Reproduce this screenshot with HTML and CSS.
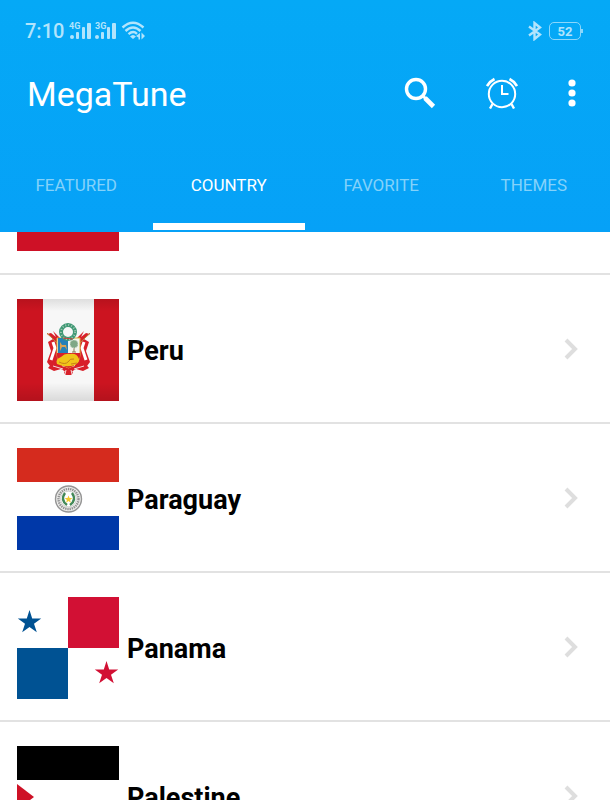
FILE: index.html
```html
<!DOCTYPE html>
<html lang="en">
<head>
  <meta charset="UTF-8" />
  <meta name="viewport" content="width=device-width, initial-scale=1.0"/>
  <title>MegaTune</title>
  <link rel="stylesheet" href="styles.css">
</head>
<body>
  <header class="header">
    <div class="status-bar">
      <span class="time">7:10</span>
      <svg class="signal" width="22" height="18" viewBox="0 0 22 18">
        <text x="0" y="7">4G</text>
        <circle cx="3" cy="15" r="2"/>
        <rect x="7" y="10" width="3" height="7" rx="1"/>
        <rect x="13" y="5" width="3" height="12" rx="1"/>
        <rect x="18" y="1" width="4" height="16" rx="1"/>
      </svg>
      <svg class="signal" width="22" height="18" viewBox="0 0 22 18">
        <text x="0" y="7">3G</text>
        <circle cx="2" cy="15" r="2"/>
        <rect x="6" y="10" width="3" height="7" rx="1"/>
        <rect x="12" y="5" width="3" height="12" rx="1"/>
        <rect x="17" y="1" width="4" height="16" rx="1"/>
      </svg>
      <svg class="wifi" width="26" height="20" viewBox="0 0 26 20">
        <g fill="none" stroke="currentColor" stroke-width="2.4">
          <path d="M1.500 6.500 Q12 -3 22.500 6.500"/>
          <path d="M4.500 10 Q12 3 19.500 10"/>
          <path d="M7.500 13.200 Q12 9.200 16 12.800"/>
        </g>
        <path d="M9 15.500 Q12 12.500 15 15.500 L12 18Z"/>
        <path d="M19 12v6.500h-1.500v-2l-2.500-1.500zM20.500 11.500l3.500 3.500-3.500 3.500z"/>
      </svg>
      <div class="status-right">
        <svg width="16" height="20" viewBox="0 0 16 20">
          <path d="M2 5.500 L13 13.500 L7.500 18 V2 L13 6.500 L2 14.500" fill="none" stroke="currentColor" stroke-width="2.4"/>
        </svg>
        <span class="battery">52</span>
      </div>
    </div>

    <div class="toolbar">
      <h1>MegaTune</h1>
      <button class="icon-btn" aria-label="Search">
        <svg width="32" height="32" viewBox="0 0 32 32" fill="none" stroke="#fff">
          <circle cx="12" cy="12" r="9.500" stroke-width="3.400"/>
          <path d="M18.500 18.500l3 3" stroke-width="3"/>
          <path d="M21 21l8.500 8.500" stroke-width="4.600"/>
        </svg>
      </button>
      <button class="icon-btn alarm" aria-label="Alarm">
        <svg width="32" height="32" viewBox="0 0 32 32" fill="none" stroke="#fff" stroke-width="2">
          <circle cx="16" cy="17" r="13.200"/>
          <path d="M16 8v9h6.500"/>
          <path d="M1 9Q3.500 4.500 8.500 2M31 9Q28.500 4.500 23.500 2" stroke-width="2.600"/>
          <path d="M6.500 27l-2.500 4.500M25.500 27l2.500 4.500" stroke-width="2.400"/>
        </svg>
      </button>
      <button class="icon-btn more" aria-label="More options">
        <svg width="8" height="28" viewBox="0 0 8 28" fill="#fff">
          <circle cx="4" cy="4" r="3.600"/>
          <circle cx="4" cy="14" r="3.600"/>
          <circle cx="4" cy="24" r="3.600"/>
        </svg>
      </button>
    </div>

    <nav class="tabs">
      <a href="#featured">FEATURED</a>
      <a href="#country" class="active">COUNTRY</a>
      <a href="#favorite">FAVORITE</a>
      <a href="#themes">THEMES</a>
    </nav>
  </header>

  <main class="country-list">
    <!-- row scrolled under the header -->
    <div class="country clipped">
      <svg class="flag-edge" viewBox="0 0 102 19"><rect width="102" height="19" fill="#ce1126"/></svg>
    </div>

    <a class="country" href="#peru">
      <svg class="flag" viewBox="0 0 102 102">
        <defs>
          <linearGradient id="shade" x1="0" y1="0" x2="0" y2="1">
            <stop offset="0" stop-color="#000" stop-opacity=".1"/>
            <stop offset=".12" stop-color="#000" stop-opacity="0"/>
            <stop offset=".82" stop-color="#000" stop-opacity="0"/>
            <stop offset="1" stop-color="#000" stop-opacity=".12"/>
          </linearGradient>
        </defs>
        <rect width="102" height="102" fill="#cc1420"/>
        <rect x="26" width="51" height="102" fill="#f7f7f7"/>
        <rect width="102" height="102" fill="url(#shade)"/>
        <!-- flags around the shield -->
        <g fill="#d8202a">
          <path d="M36 32l9 9v26H33l-3-4 4-11-3-9 5-3-6-5 4-1 5 4z"/>
          <path d="M67 32l-9 9v26h12l3-4-4-11 3-9-5-3 6-5-4-1-5 4z"/>
          <path d="M36 63q15 10 31 0l5 6-6 3-7-2-5 3h-5l-5-3-7 2-6-3z"/>
          <path d="M50 67h3l3 7-2 2h-5l-2-2z"/>
        </g>
        <path d="M36 43l2 6-4 12M67 43l-2 6 4 12" fill="none" stroke="#fff" stroke-width="3"/>
        <path d="M30 34l14 14M73 34L59 48" stroke="#b68b3a" stroke-width="1"/>
        <path d="M36 67l10 3M67 67l-10 3M49 71l-1 4M54 71l1 4" stroke="#f5dede" stroke-width="1"/>
        <!-- shield -->
        <path d="M40 39h23v17q0 9-11.500 13Q40 65 40 56z" fill="#f4f5ef" stroke="#d9b13a" stroke-width="1"/>
        <path d="M41 39h10v15H41z" fill="#2680b8"/>
        <path d="M40 54h23v3q0 8-11.500 12Q40 65 40 57z" fill="#d8202a"/>
        <path d="M43 43l2 3h4l1 5-2-3h-3l-2 4v-5z" fill="#d9a253"/>
        <path d="M57 45v8M55 53h4" stroke="#8a7a52" stroke-width="1"/>
        <circle cx="57" cy="45" r="4" fill="#7fa886" stroke="#dfe9dc" stroke-dasharray="1 1"/>
        <path d="M40 65q-2-5 4-7 4-4 9-3 7-1 9 5 1 3-4 6-9 3-18-1z" fill="#f0c419"/>
        <path d="M42 63q6 3 9 0 2-4 6-3M54 65l6-1" fill="none" stroke="#c7801c" stroke-width="1"/>
        <!-- wreath -->
        <circle cx="51" cy="33" r="7" fill="none" stroke="#3f9874" stroke-width="4"/>
        <circle cx="51" cy="33" r="7" fill="none" stroke="#a3c9b5" stroke-width="2" stroke-dasharray="1 2"/>
        <path d="M46 39l10 1" stroke="#cc3d3a" stroke-width="1"/>
      </svg>
      <span class="name">Peru</span>
      <svg class="chevron" viewBox="0 0 14 22"><path d="M2 2l9 9-9 9"/></svg>
    </a>

    <a class="country" href="#paraguay">
      <svg class="flag" viewBox="0 0 102 102">
        <rect width="102" height="102" fill="#fff"/>
        <rect width="102" height="34" fill="#d52b1e"/>
        <rect y="68" width="102" height="34" fill="#0038a8"/>
        <circle cx="51.500" cy="51" r="13" fill="#eeeeec" stroke="#959595" stroke-width="1.400"/>
        <circle cx="51.500" cy="51" r="10" fill="none" stroke="#919191" stroke-width="2.400" stroke-dasharray="1.400 .8"/>
        <circle cx="51.500" cy="51" r="7.800" fill="#fff" stroke="#b7b7b7" stroke-width=".6"/>
        <path d="M48 45q-5 7 2 12M55 45q5 7-2 12" fill="none" stroke="#438958" stroke-width="2.400"/>
        <path d="M51.500 47.500l1 2.600h2.800l-2.200 1.800.8 2.800-2.400-1.700-2.400 1.700.8-2.800-2.200-1.800h2.800z" fill="#f3c92f"/>
      </svg>
      <span class="name">Paraguay</span>
      <svg class="chevron" viewBox="0 0 14 22"><path d="M2 2l9 9-9 9"/></svg>
    </a>

    <a class="country" href="#panama">
      <svg class="flag" viewBox="0 0 102 102">
        <rect width="102" height="102" fill="#fff"/>
        <rect x="51" width="51" height="51" fill="#d21034"/>
        <rect y="51" width="51" height="51" fill="#005293"/>
        <path d="M12.500 13l2.700 8.500h9l-7.200 5.200 2.800 8.600-7.300-5.300-7.300 5.300L8 26.700.8 21.500h9z" fill="#005293"/>
        <path d="M89.500 64l2.700 8.500h9L94 77.700l2.800 8.600-7.300-5.300-7.300 5.300 2.800-8.600-7.200-5.200h9z" fill="#d21034"/>
      </svg>
      <span class="name">Panama</span>
      <svg class="chevron" viewBox="0 0 14 22"><path d="M2 2l9 9-9 9"/></svg>
    </a>

    <a class="country" href="#palestine">
      <svg class="flag" viewBox="0 0 102 102">
        <rect width="102" height="102" fill="#fff"/>
        <rect width="102" height="34" fill="#000"/>
        <rect y="68" width="102" height="34" fill="#007a3d"/>
        <path d="M0 38l17 13L0 64z" fill="#ce1126"/>
      </svg>
      <span class="name">Palestine</span>
      <svg class="chevron" viewBox="0 0 14 22"><path d="M2 2l9 9-9 9"/></svg>
    </a>
  </main>
</body>
</html>
```
FILE: styles.css
```css
* {
  box-sizing: border-box;
}

body {
  font-family: Roboto, Arial, sans-serif;
  margin: 0;
  height: 100vh;
  display: flex;
  flex-direction: column;
  overflow: hidden;
  background: #fff;
}

.header {
  flex-shrink: 0;
  background: linear-gradient(#05a9f6, #06a1f7);
  color: #fff;
}

.status-bar {
  display: flex;
  align-items: center;
  height: 62px;
  padding: 0 29px 0 25px;
  color: #b2e4fc;
}

.status-bar svg {
  fill: currentColor;
}

.time {
  font-size: 20px;
  font-weight: 500;
  margin-right: 5px;
}

.signal {
  margin-right: 4px;
  overflow: visible;
}

.signal text {
  font-size: 9px;
  font-weight: bold;
}

.status-right {
  display: flex;
  align-items: center;
  gap: 6px;
  margin-left: auto;
}

.battery {
  position: relative;
  width: 32px;
  height: 18px;
  border: 1px solid #8cd7fb;
  border-radius: 5px;
  font-size: 13px;
  font-weight: bold;
  line-height: 17px;
  text-align: center;
}

/* battery tip */
.battery::after {
  content: "";
  position: absolute;
  right: -3px;
  top: 6px;
  width: 2px;
  height: 4px;
  background: #8cd7fb;
}

.toolbar {
  display: flex;
  align-items: center;
  height: 62px;
  padding: 0 34px 0 27px;
}

h1 {
  flex: 1;
  margin: 0;
  padding-top: 1px;
  font-size: 34px;
  font-weight: normal;
}

.icon-btn {
  display: flex;
  padding: 0;
  border: none;
  background: none;
  cursor: pointer;
}

.alarm {
  margin: 0 50px;
}

.tabs {
  display: grid;
  grid-template-columns: repeat(4, 1fr);
  height: 108px;
  padding-bottom: 2px;
}

.tabs a {
  display: flex;
  align-items: center;
  justify-content: center;
  padding-top: 23px;
  border-bottom: 7px solid transparent;
  color: #83d2fa;
  font-size: 17px;
  text-decoration: none;
}

.tabs .active {
  color: #fff;
  border-color: #fff;
}

.country-list {
  flex: 1;
  overflow: hidden;
}

.country {
  display: flex;
  align-items: center;
  padding: 24px 32px 21px 17px;
  border-bottom: 2px solid #e2e2e2;
  color: #000;
  text-decoration: none;
}

.country.clipped {
  padding-top: 0;
  padding-bottom: 22px;
}

.flag {
  width: 102px;
  height: 102px;
}

.flag-edge {
  width: 102px;
  height: 19px;
}

.name {
  flex: 1;
  margin-left: 8px;
  padding-top: 2px;
  font-size: 27px;
  font-weight: bold;
}

.chevron {
  width: 14px;
  height: 22px;
  margin-bottom: 2px;
  fill: none;
  stroke: #dedede;
  stroke-width: 4;
}
```
